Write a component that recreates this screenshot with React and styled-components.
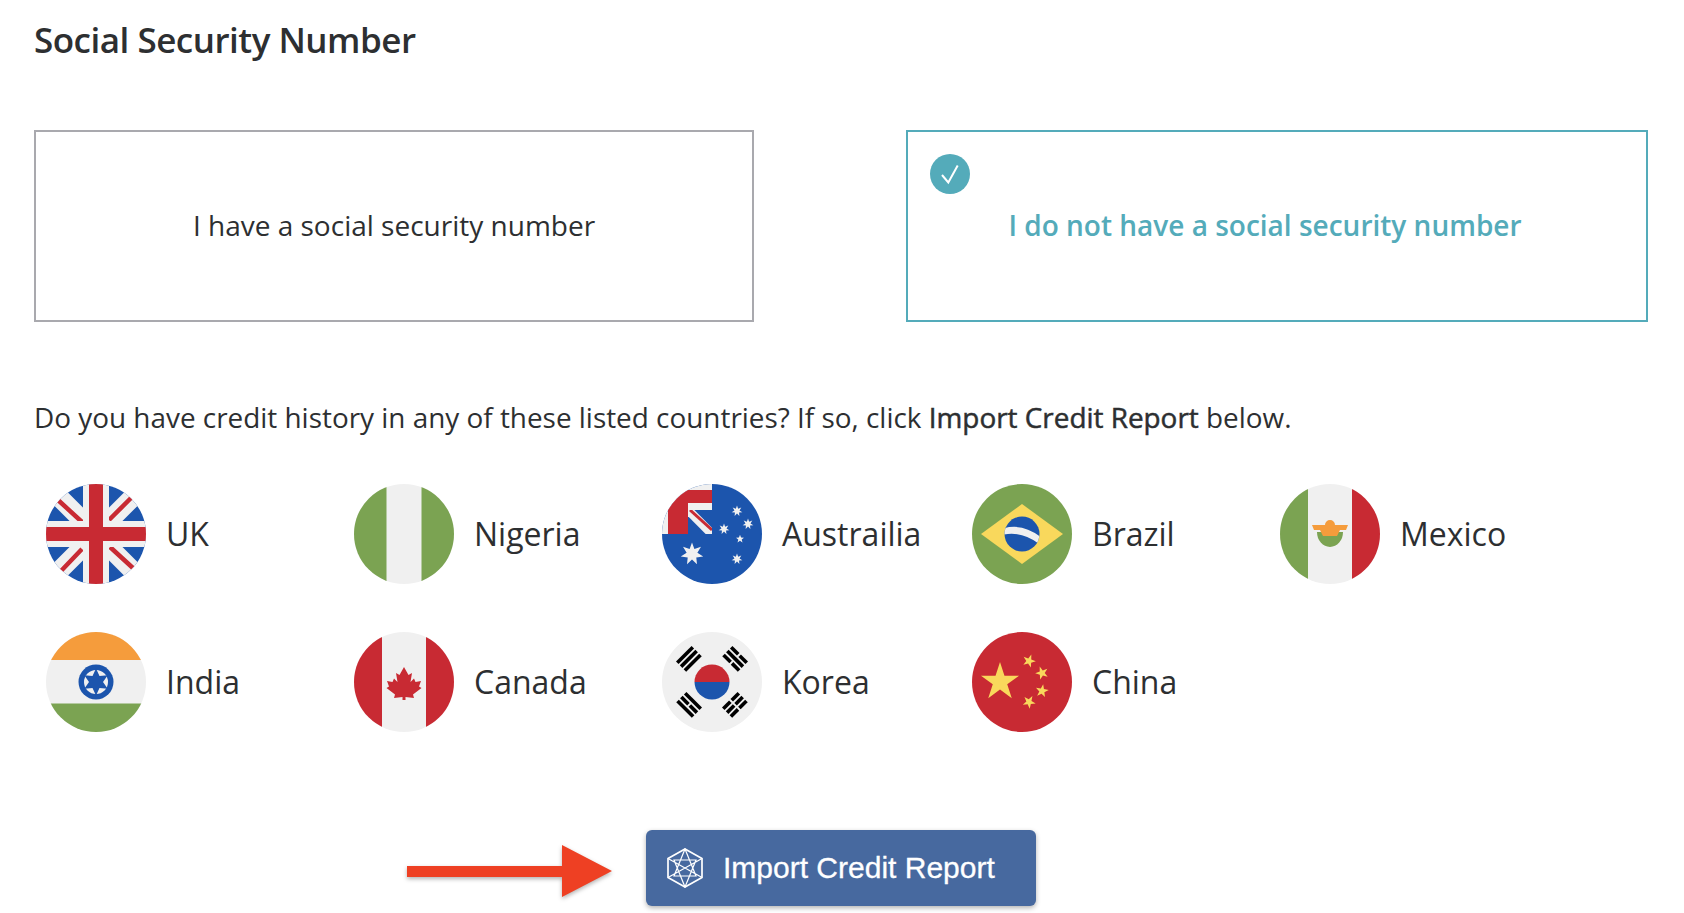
import React from 'react';
import styled, { createGlobalStyle } from 'styled-components';

const GREEN = '#7ba352';
const RED = '#c82a33';
const BLUE = '#1c55ad';
const PALE = '#f0f0f0';
const YELLOW = '#f9d85c';
const ORANGE = '#f59c3c';

const GlobalStyle = createGlobalStyle`
    html, body {
        margin: 0;
        padding: 0;
        background: #fff;
    }
    body {
        font-family: "Open Sans", "Noto Sans", sans-serif;
        color: #2d2f31;
    }
`;

const starPoints = (cx, cy, outer, inner, n = 5, rot = -90) => {
    const pts = [];
    for (let i = 0; i < n * 2; i++) {
        const r = i % 2 === 0 ? outer : inner;
        const a = ((rot + (i * 180) / n) * Math.PI) / 180;
        pts.push(`${(cx + r * Math.cos(a)).toFixed(2)},${(cy + r * Math.sin(a)).toFixed(2)}`);
    }
    return pts.join(' ');
};

const Disc = ({ id, children }) => (
    <svg width="100" height="100" viewBox="0 0 100 100">
        <clipPath id={id}>
            <circle cx="50" cy="50" r="50" />
        </clipPath>
        <g clipPath={`url(#${id})`}>{children}</g>
    </svg>
);

const UkFlag = () => (
    <Disc id="uk">
        <rect width="100" height="100" fill={BLUE} />
        <path d="M0 0 L100 100 M100 0 L0 100" stroke={PALE} strokeWidth="19" />
        <path d="M12 16 L36 38 M63 36 L86 13 M64 63 L88 85 M36 65 L15 87" stroke={RED} strokeWidth="4.5" />
        <rect x="37" width="26" height="100" fill={PALE} />
        <rect y="37" width="100" height="26" fill={PALE} />
        <rect x="43" width="14" height="100" fill={RED} />
        <rect y="43" width="100" height="14" fill={RED} />
    </Disc>
);

const NigeriaFlag = () => (
    <Disc id="ng">
        <rect width="100" height="100" fill={PALE} />
        <rect width="32.5" height="100" fill={GREEN} />
        <rect x="67.5" width="32.5" height="100" fill={GREEN} />
    </Disc>
);

const AustraliaFlag = () => (
    <Disc id="au">
        <rect width="100" height="100" fill={BLUE} />
        <rect width="50" height="50" fill={PALE} />
        <path d="M6 50 V6 H50 V19 H26 V50 Z" fill={RED} />
        <rect x="26" y="26" width="24" height="24" fill={BLUE} />
        <clipPath id="au-inner">
            <rect x="26" y="26" width="24" height="24" />
        </clipPath>
        <g clipPath="url(#au-inner)">
            <path d="M26 26 L50 50" stroke={PALE} strokeWidth="9" />
            <path d="M28 26 L50 46" stroke={RED} strokeWidth="3" />
        </g>
        <polygon points={starPoints(30, 70, 11.5, 5.5, 7)} fill={PALE} />
        <polygon points={starPoints(75, 27, 5.5, 2.6, 7)} fill={PALE} />
        <polygon points={starPoints(62, 45, 5.5, 2.6, 7)} fill={PALE} />
        <polygon points={starPoints(86, 40, 5.5, 2.6, 7)} fill={PALE} />
        <polygon points={starPoints(78, 55, 4.2, 1.8, 5)} fill={PALE} />
        <polygon points={starPoints(75, 75, 5.5, 2.6, 7)} fill={PALE} />
    </Disc>
);

const BrazilFlag = () => (
    <Disc id="br">
        <rect width="100" height="100" fill={GREEN} />
        <polygon points="50,20 91,50 50,80 9,50" fill={YELLOW} />
        <circle cx="50" cy="50" r="17.5" fill={BLUE} />
        <clipPath id="br-globe">
            <circle cx="50" cy="50" r="17.5" />
        </clipPath>
        <path clipPath="url(#br-globe)" d="M30 45 Q50 38 70 54 L70 62 Q50 46 30 51 Z" fill={PALE} />
    </Disc>
);

const MexicoFlag = () => (
    <Disc id="mx">
        <rect width="100" height="100" fill={PALE} />
        <rect width="28" height="100" fill={GREEN} />
        <rect x="72" width="28" height="100" fill={RED} />
        <path d="M37 48 A13 15 0 0 0 63 48 Z" fill={GREEN} />
        <path d="M32 41 H45 A5 5 0 0 1 55 41 H68 L66 46 H60 L57 52 H43 L40 46 H34 Z" fill={ORANGE} />
    </Disc>
);

const IndiaFlag = () => (
    <Disc id="in">
        <rect width="100" height="100" fill={PALE} />
        <rect width="100" height="28" fill={ORANGE} />
        <rect y="71.5" width="100" height="28.5" fill={GREEN} />
        <circle cx="50" cy="50" r="17.5" fill={BLUE} />
        <circle cx="50" cy="50" r="12" fill={PALE} />
        <polygon points={starPoints(50, 50, 13.5, 7, 6)} fill={BLUE} />
    </Disc>
);

const CanadaFlag = () => (
    <Disc id="ca">
        <rect width="100" height="100" fill={PALE} />
        <rect width="28" height="100" fill={RED} />
        <rect x="72" width="28" height="100" fill={RED} />
        <path
            d="M50 35 L54.5 43 L58 41 L56.5 50 L60 46.5 L61.5 50 L67 49 L65 54.5 L67.5 56 L59 62.5 L60 66 L51.5 65 V68 H48.5 V65 L40 66 L41 62.5 L32.5 56 L35 54.5 L33 49 L38.5 50 L40 46.5 L43.5 50 L42 41 L45.5 43 Z"
            fill={RED}
        />
    </Disc>
);

const Trigram = ({ transform, breaks }) => (
    <g transform={transform}>
        {[0, 1, 2].map((i) => {
            const y = -7.4 + i * 5.4;
            return breaks[i] ? (
                <g key={i}>
                    <rect x="-11" y={y} width="10" height="3.6" fill="#000" />
                    <rect x="1" y={y} width="10" height="3.6" fill="#000" />
                </g>
            ) : (
                <rect key={i} x="-11" y={y} width="22" height="3.6" fill="#000" />
            );
        })}
    </g>
);

const KoreaFlag = () => (
    <Disc id="kr">
        <rect width="100" height="100" fill={PALE} />
        <path d="M32.5 50 A17.5 17.5 0 0 1 67.5 50 Z" fill={RED} />
        <path d="M32.5 50 A17.5 17.5 0 0 0 67.5 50 Z" fill={BLUE} />
        <Trigram transform="translate(27 27) rotate(-45)" breaks={[false, false, false]} />
        <Trigram transform="translate(73 27) rotate(45)" breaks={[true, false, true]} />
        <Trigram transform="translate(27 73) rotate(45)" breaks={[false, true, false]} />
        <Trigram transform="translate(73 73) rotate(-45)" breaks={[true, true, true]} />
    </Disc>
);

const ChinaFlag = () => (
    <Disc id="cn">
        <rect width="100" height="100" fill={RED} />
        <polygon points={starPoints(28, 50, 20, 7.6, 5)} fill={YELLOW} />
        <polygon points={starPoints(57, 29, 6.8, 2.7, 5, -70)} fill={YELLOW} />
        <polygon points={starPoints(70, 41, 6.8, 2.7, 5, -110)} fill={YELLOW} />
        <polygon points={starPoints(70, 59, 6.8, 2.7, 5, -80)} fill={YELLOW} />
        <polygon points={starPoints(57, 70, 6.8, 2.7, 5, -60)} fill={YELLOW} />
    </Disc>
);

const COUNTRIES = [
    { name: 'UK', Flag: UkFlag },
    { name: 'Nigeria', Flag: NigeriaFlag },
    { name: 'Austrailia', Flag: AustraliaFlag },
    { name: 'Brazil', Flag: BrazilFlag },
    { name: 'Mexico', Flag: MexicoFlag },
    { name: 'India', Flag: IndiaFlag },
    { name: 'Canada', Flag: CanadaFlag },
    { name: 'Korea', Flag: KoreaFlag },
    { name: 'China', Flag: ChinaFlag },
];

const App = () => {
    return (
        <Page>
            <GlobalStyle />
            <Title>Social Security Number</Title>
            <Options>
                <OptionBox>I have a social security number</OptionBox>
                <OptionBox $selected>
                    <CheckBadge>
                        <svg width="40" height="40" viewBox="0 0 40 40" fill="none">
                            <path d="M12 21 L18.3 28.5 L27.7 11.5" stroke="#fff" strokeWidth="2" />
                        </svg>
                    </CheckBadge>
                    I do not have a social security number
                </OptionBox>
            </Options>
            <Question>
                Do you have credit history in any of these listed countries? If so, click{' '}
                <Strong>Import Credit Report</Strong> below.
            </Question>
            <CountryGrid>
                {COUNTRIES.map(({ name, Flag }) => (
                    <Country key={name}>
                        <Flag />
                        <CountryName>{name}</CountryName>
                    </Country>
                ))}
            </CountryGrid>
            <ActionRow>
                <ArrowIcon width="205" height="60" viewBox="0 0 205 60">
                    <path d="M0 28 H155 V7 L205 33 L155 59 V39 H0 Z" fill="#ee4023" />
                </ArrowIcon>
                <ImportButton>
                    <svg width="38" height="40" viewBox="0 0 38 40" fill="none" stroke="#fff" strokeWidth="1.2">
                        <path d="M19 1 L36 10.5 V29.5 L19 39 L2 29.5 V10.5 Z" strokeWidth="1.7" />
                        <path d="M19 1 L8 28 H30 Z M19 39 L8 12 H30 Z M2 10.5 L36 29.5 M36 10.5 L2 29.5" />
                    </svg>
                    Import Credit Report
                </ImportButton>
            </ActionRow>
        </Page>
    );
};

const Page = styled.div`
    width: 1684px;
    height: 913px;
    padding: 16px 36px 0 34px;
    box-sizing: border-box;
    overflow: hidden;
`;

const Title = styled.h1`
    margin: 0;
    font-size: 35px;
    line-height: 48px;
    font-weight: 600;
    letter-spacing: -0.5px;
    color: #2d2f31;
`;

const Options = styled.div`
    display: flex;
    justify-content: space-between;
    margin-top: 66px;
`;

const OptionBox = styled.div`
    position: relative;
    box-sizing: border-box;
    width: ${(p) => (p.$selected ? '742px' : '720px')};
    height: 192px;
    display: flex;
    align-items: center;
    justify-content: center;
    padding-right: ${(p) => (p.$selected ? '24px' : '0')};
    padding-bottom: 2px;
    border: 2px solid ${(p) => (p.$selected ? '#54abba' : '#a9a9ae')};
    font-size: 28px;
    font-weight: ${(p) => (p.$selected ? 600 : 400)};
    color: ${(p) => (p.$selected ? '#54abba' : '#2d2f31')};
`;

const CheckBadge = styled.span`
    position: absolute;
    left: 22px;
    top: 22px;
    width: 40px;
    height: 40px;
    border-radius: 50%;
    background: #54abba;
    display: flex;
`;

const Question = styled.p`
    margin: 75px 0 0;
    font-size: 27.9px;
    line-height: 40px;
    color: #2d2f31;
`;

const Strong = styled.span`
    -webkit-text-stroke: 0.5px #2d2f31;
`;

const CountryGrid = styled.div`
    display: grid;
    grid-template-columns: 308px 308px 310px 308px 308px;
    row-gap: 48px;
    margin-top: 47px;
    padding-left: 12px;
`;

const Country = styled.div`
    display: flex;
    align-items: center;
    gap: 20px;
    height: 100px;
`;

const CountryName = styled.span`
    font-size: 32px;
    color: #2d2f31;
    position: relative;
    top: -1px;
`;

const ActionRow = styled.div`
    display: flex;
    align-items: center;
    gap: 34px;
    margin-top: 98px;
    padding-left: 373px;
`;

const ArrowIcon = styled.svg`
    flex: none;
    overflow: visible;
    filter: drop-shadow(0 2px 2px rgba(0, 0, 0, 0.3));
`;

const ImportButton = styled.button`
    width: 390px;
    height: 76px;
    display: flex;
    align-items: center;
    gap: 19px;
    padding: 0 0 0 20px;
    border: none;
    border-radius: 6px;
    background: #47699f;
    box-shadow: 0 2px 5px rgba(0, 0, 0, 0.3);
    color: #fff;
    font-family: "Liberation Sans", Arial, sans-serif;
    font-size: 30px;
    -webkit-text-stroke: 0.3px #fff;
`;

export default App;
